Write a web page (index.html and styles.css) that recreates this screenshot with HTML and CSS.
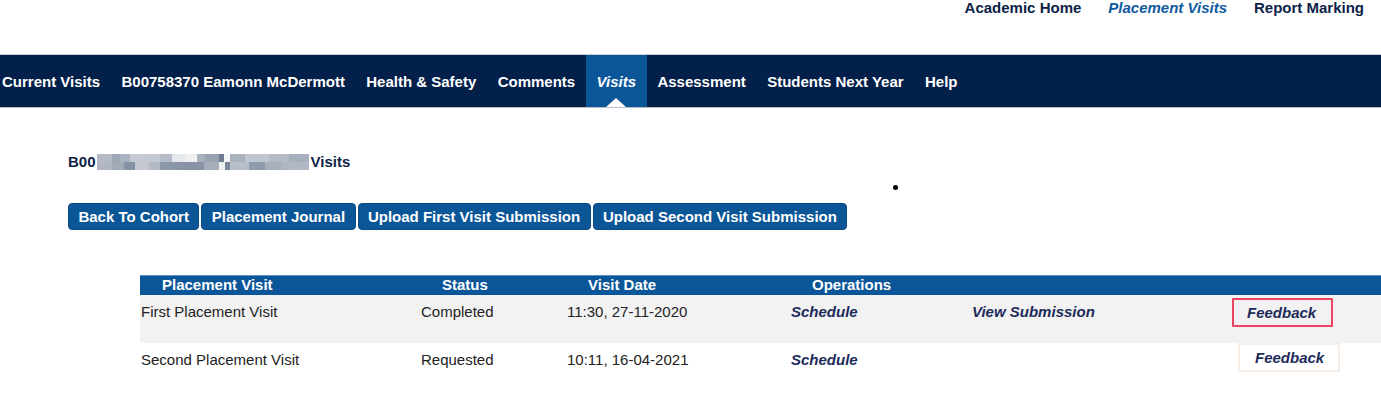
FILE: index.html
```html
<!DOCTYPE html>
<html lang="en">
<head>
<meta charset="utf-8">
<title>Placement Visits</title>
<link rel="stylesheet" href="styles.css">
</head>
<body>
<div class="toplinks">
  <a class="toplink">Academic Home</a>
  <a class="toplink active">Placement Visits</a>
  <a class="toplink">Report Marking</a>
</div>
<nav class="nav">
  <ul class="nav-list">
    <li class="nav-item">Current Visits</li>
    <li class="nav-item">B00758370 Eamonn McDermott</li>
    <li class="nav-item">Health &amp; Safety</li>
    <li class="nav-item">Comments</li>
    <li class="nav-item current">Visits</li>
    <li class="nav-item">Assessment</li>
    <li class="nav-item">Students Next Year</li>
    <li class="nav-item">Help</li>
  </ul>
</nav>
<main class="content">
  <h1 class="title">B00<span class="redacted"></span>Visits</h1>
  <div class="dot-row"><span class="dot"></span></div>
  <div class="buttons">
    <button class="btn">Back To Cohort</button>
    <button class="btn">Placement Journal</button>
    <button class="btn">Upload First Visit Submission</button>
    <button class="btn">Upload Second Visit Submission</button>
  </div>
  <div class="table">
    <div class="thead">
      <span>Placement Visit</span>
      <span>Status</span>
      <span>Visit Date</span>
      <span>Operations</span>
    </div>
    <div class="row shaded">
      <span class="cell">First Placement Visit</span>
      <span class="cell">Completed</span>
      <span class="cell">11:30, 27-11-2020</span>
      <a class="cell link">Schedule</a>
      <a class="cell link">View Submission</a>
      <a class="fb fb-red">Feedback</a>
    </div>
    <div class="row">
      <span class="cell">Second Placement Visit</span>
      <span class="cell">Requested</span>
      <span class="cell">10:11, 16-04-2021</span>
      <a class="cell link">Schedule</a>
      <span class="cell"></span>
      <a class="fb fb-faint">Feedback</a>
    </div>
  </div>
</main>
</body>
</html>
```

FILE: styles.css
```css
* { box-sizing: border-box; }
html, body { margin: 0; padding: 0; background: #fff; }
body {
  font-family: "Liberation Sans", Arial, sans-serif;
  font-size: 15px;
  color: #222;
  overflow: hidden;
}
.toplinks {
  display: flex;
  justify-content: flex-end;
  gap: 27px;
  padding-right: 17px;
  height: 15px;
  line-height: 15px;
}
.toplink {
  font-weight: bold;
  color: #0d2347;
  text-decoration: none;
}
.toplink.active { color: #0e5aa0; font-style: italic; }

.nav {
  margin-top: 39px;
  background: #02204a;
  border-top: 1px solid #c9cdd4;
  border-bottom: 1px solid #b9bfc9;
}
.nav-list {
  list-style: none;
  margin: 0;
  padding: 0;
  display: flex;
  height: 52px;
}
.nav-item {
  position: relative;
  padding: 0 10.7px;
  line-height: 53px;
  color: #fff;
  font-weight: bold;
  white-space: nowrap;
}
.nav-item:first-child { padding-left: 2px; }
.nav-item.current {
  background: #0a5699;
  font-style: italic;
}
.nav-item.current::after {
  content: "";
  position: absolute;
  left: 50%;
  bottom: 0;
  margin-left: -10px;
  border-left: 10px solid transparent;
  border-right: 10px solid transparent;
  border-bottom: 9px solid #fff;
}

.content { padding: 45px 0 0 68px; }
.title {
  margin: 0;
  font-size: 15px;
  line-height: 18px;
  font-weight: bold;
  color: #0d2347;
  display: flex;
  align-items: center;
}
.redacted {
  display: inline-block;
  width: 212px;
  height: 16px;
  margin: 0 2px 0 1px;
  background:
    linear-gradient(90deg,
      #b4bac6 0 15px, #9ea7b5 15px 23px, #aab2bf 23px 33px, #c4c9d2 33px 47px,
      #c2c8d1 47px 63px, #b7bdc8 63px 75px, #e4e7eb 75px 88px, #eef0f2 88px 100px,
      #a9b1bd 100px 108px, #9aa3b1 108px 122px, #6f7d93 122px 127px, #f5f6f7 127px 133px,
      #aab2be 133px 148px, #c0c6cf 148px 172px, #b4bbc6 172px 192px, #a7afbc 192px 212px) top / 100% 8px no-repeat,
    linear-gradient(90deg,
      #b0b7c3 0 15px, #a3abb8 15px 27px, #8692a5 27px 38px, #c3c8d1 38px 52px,
      #b3bac5 52px 63px, #8c97a8 63px 80px, #8893a5 80px 107px, #a6aebb 107px 122px,
      #eef0f2 122px 128px, #7b889c 128px 133px, #b9bfc9 133px 152px, #8f9aab 152px 168px,
      #a8b0bc 168px 185px, #b1b8c3 185px 212px) bottom / 100% 8px no-repeat;
  filter: blur(0.4px);
}
.dot-row {
  margin-top: 14px;
  padding-left: 825px;
  height: 5px;
  display: flex;
}
.dot {
  width: 5px;
  height: 5px;
  border-radius: 50%;
  background: #000;
}
.buttons {
  margin-top: 13px;
  display: flex;
  gap: 2px;
}
.btn {
  font-family: "Liberation Sans", Arial, sans-serif;
  font-size: 15px;
  font-weight: bold;
  color: #fff;
  background: #0b5697;
  border: 1px solid #0a4a85;
  border-radius: 4px;
  height: 27px;
  padding: 0 9.4px;
  line-height: 24px;
  white-space: nowrap;
}

.table {
  margin: 45px 0 0 72px;
}
.thead {
  display: grid;
  grid-template-columns: 280px 146px 224px 1fr;
  padding-left: 22px;
  height: 20px;
  line-height: 17px;
  background: #0a5699;
  border-top: 1px solid #5b8fc0;
  color: #fff;
  font-weight: bold;
}
.row {
  display: grid;
  grid-template-columns: 280px 146px 224px 181px 260px 1fr;
  align-items: start;
  padding-left: 1px;
  height: 48px;
}
.row.shaded { background: #f2f2f2; }
.cell {
  padding-top: 8px;
  line-height: 18px;
  white-space: nowrap;
}
.link {
  color: #1c2b5a;
  font-weight: bold;
  font-style: italic;
  text-decoration: none;
}
.fb {
  justify-self: start;
  color: #1c2b5a;
  font-weight: bold;
  font-style: italic;
  line-height: 17px;
  white-space: nowrap;
}
.fb-red {
  margin-top: 3px;
  padding: 4px 15px 4px 13px;
  border: 2px solid #ec4463;
  border-radius: 1px;
}
.fb-faint {
  margin-top: 0;
  margin-left: 6px;
  padding: 4px 14px 4px 15px;
  border: 2px solid #f6eee4;
}
```
